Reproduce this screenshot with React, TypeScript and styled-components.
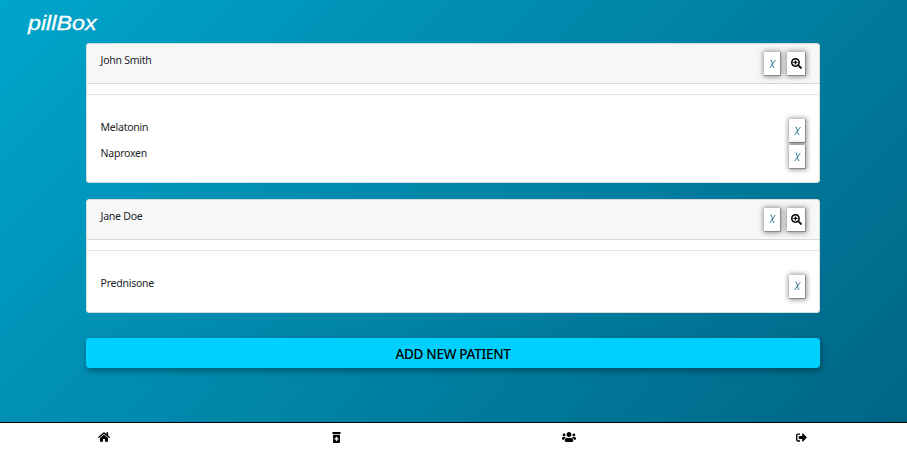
import React from "react";
import styled, { createGlobalStyle } from "styled-components";
import { FaHome, FaPrescriptionBottleAlt, FaUsers, FaSignOutAlt, FaSearchPlus } from "react-icons/fa";

const GlobalStyle = createGlobalStyle`
  *, *::before, *::after { box-sizing: border-box; }
  body {
    margin: 0;
    overflow: hidden;
    font-family: "Noto Sans", sans-serif;
    color: #212529;
  }
`;

const Page = styled.div`
  height: 451px;
  display: flex;
  flex-direction: column;
  background: linear-gradient(135deg, #00a5cb, #006484);
`;

const Brand = styled.header`
  height: 43px;
  padding: 11px 0 0 28px;
  font: italic 20.5px/24px "Liberation Sans", sans-serif;
  color: #fff;
  -webkit-text-stroke: 0.3px #fff;
`;

const BrandName = styled.span`
  display: inline-block;
  transform: scaleX(1.135);
  transform-origin: left;
`;

const Main = styled.main`
  flex: 1;
  width: 734px;
  margin-left: 86px;
  display: flex;
  flex-direction: column;
`;

const Card = styled.section`
  margin-bottom: 16px;
  border: 1px solid #d7dbdc;
  border-radius: 3px;
  background: #fff;
`;

const CardHeader = styled.div`
  height: 40px;
  padding: 8px 13px 0;
  display: flex;
  justify-content: space-between;
  align-items: flex-start;
  background: #f7f7f7;
  border-bottom: 1px solid #d8d8d8;
  border-radius: 2px 2px 0 0;
`;

const Label = styled.span`
  padding-left: 0.6px;
  font-size: 10.5px;
  line-height: 17px;
  letter-spacing: -0.25px;
  white-space: nowrap;
`;

const Actions = styled.div`
  display: flex;
  gap: 6px;
`;

const IconButton = styled.button<{ $wide?: boolean }>`
  width: ${(p) => (p.$wide ? 19 : 17)}px;
  height: 24px;
  padding: 0;
  display: flex;
  align-items: center;
  justify-content: center;
  border: 0;
  border-right: 1px solid #8c8c8c;
  border-bottom: 1px solid #8c8c8c;
  background: #fff;
  color: ${(p) => (p.$wide ? "#000" : "#286f8b")};
  box-shadow: 0 0 5px 1px rgba(0, 0, 0, 0.4);
  border-radius: 1px;
`;

const Divider = styled.hr`
  margin: 10px 0 0;
  border: 0;
  border-top: 1px solid #e3e3e3;
`;

const Medications = styled.div`
  padding: 24px 13px 10.4px;
`;

const Medication = styled.div`
  height: 26.3px;
  display: flex;
  justify-content: space-between;
  align-items: flex-start;
`;

const AddButton = styled.button`
  height: 30px;
  margin-top: 9.3px;
  padding: 2px 0 0;
  border: 0;
  border-radius: 4px;
  background: #00d0ff;
  color: #000;
  font: 500 13.5px/20px "Noto Sans", sans-serif;
  letter-spacing: -0.3px;
  box-shadow: 1px 3px 7px rgba(0, 0, 0, 0.35);
`;

const Nav = styled.nav`
  height: 29px;
  display: flex;
  justify-content: space-between;
  align-items: center;
  padding: 0 98px 0 97px;
  border-top: 1px solid #000;
  background: #fff;
  color: #000;
`;

const NavItem = styled.a`
  width: 14px;
  display: flex;
  justify-content: center;
`;

const RemoveGlyph = () => (
  <svg width="7" height="10" viewBox="0 0 7 10" fill="none" stroke="currentColor" strokeWidth="0.9">
    <path d="M6.4 1 L0.6 9 M1.5 1 H2.3 L4.4 8.5 H5.3" />
  </svg>
);

interface Patient {
  name: string;
  medications: string[];
}

const patients: Patient[] = [
  { name: "John Smith", medications: ["Melatonin", "Naproxen"] },
  { name: "Jane Doe", medications: ["Prednisone"] },
];

export default function App() {
  return (
    <>
      <GlobalStyle />
      <Page>
        <Brand><BrandName>pillBox</BrandName></Brand>
        <Main>
          {patients.map((patient) => (
            <Card key={patient.name}>
              <CardHeader>
                <Label>{patient.name}</Label>
                <Actions>
                  <IconButton aria-label="Remove patient"><RemoveGlyph /></IconButton>
                  <IconButton $wide aria-label="View patient"><FaSearchPlus size={11} /></IconButton>
                </Actions>
              </CardHeader>
              <Divider />
              <Medications>
                {patient.medications.map((med) => (
                  <Medication key={med}>
                    <Label>{med}</Label>
                    <IconButton aria-label="Remove medication"><RemoveGlyph /></IconButton>
                  </Medication>
                ))}
              </Medications>
            </Card>
          ))}
          <AddButton>ADD NEW PATIENT</AddButton>
        </Main>
        <Nav>
          <NavItem><FaHome size={12} /></NavItem>
          <NavItem><FaPrescriptionBottleAlt size={11} /></NavItem>
          <NavItem><FaUsers size={14} /></NavItem>
          <NavItem><FaSignOutAlt size={11} /></NavItem>
        </Nav>
      </Page>
    </>
  );
}
